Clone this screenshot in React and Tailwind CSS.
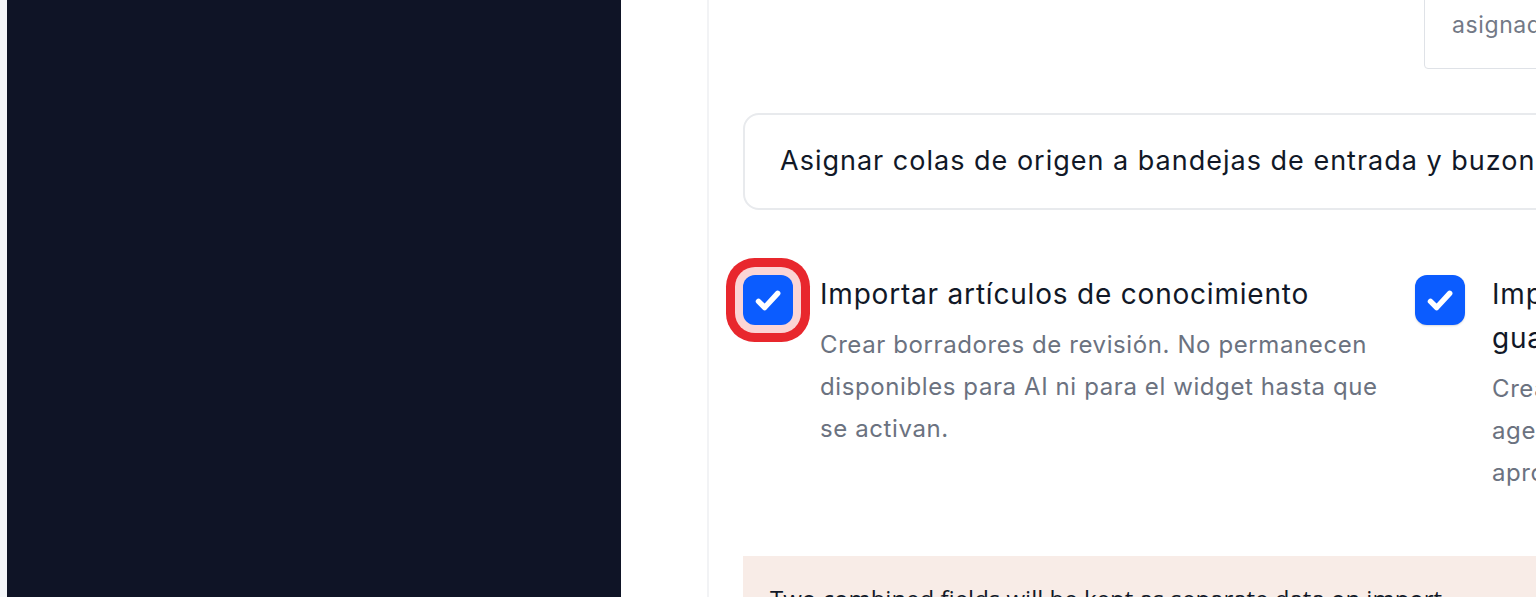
import React from 'react';

const Check = () => (
  <svg viewBox="0 0 24 24" className="w-[40px] h-[40px]" fill="none" stroke="white" strokeWidth={3.3} strokeLinecap="round" strokeLinejoin="round">
    <path d="M6.3 12.8l3.7 3.7L17.8 8" />
  </svg>
);

const Option = ({ focused, title, children }) => (
  <div className="flex items-start gap-[27px]">
    <div
      className={
        'shrink-0 mt-[3px] w-[50px] h-[50px] rounded-[12px] bg-[#0b5cff] flex items-center justify-center ' +
        (focused ? 'shadow-[0_0_0_8px_#fbd5d5,0_0_0_17px_#e8272d]' : 'shadow-[0_1px_2px_rgba(0,0,0,0.15)]')
      }
    >
      <Check />
    </div>
    <div className="flex-1 min-w-0">
      <div className="text-[28px] leading-[44px] tracking-[0.8px] text-[#111827]">{title}</div>
      <div className="mt-[8px] text-[24px] leading-[42px] tracking-[0.6px] text-[#6b7280]">{children}</div>
    </div>
  </div>
);

export default function App() {
  return (
    <div
      className="w-[1536px] h-[597px] overflow-hidden flex bg-white"
      style={{ fontFamily: 'Inter, "Noto Sans", sans-serif' }}
    >
      <div className="w-[7px] shrink-0 bg-[#f4f6f9]" />
      <div className="w-[614px] shrink-0 bg-[#0f1426]" />
      <div className="w-[86px] shrink-0 bg-white" />
      <div className="w-[2px] shrink-0 bg-[#f2f3f5]" />

      <div className="shrink-0 w-[1400px] pl-[34px]">
        {/* top input, mostly cut off */}
        <div className="h-[69px] flex">
          <div className="ml-[681px] -mt-[21px] w-[500px] h-[90px] border border-[#dfe2e7] rounded-b-[4px] pl-[27px] pt-[29px] text-[23px] leading-[32px] tracking-[0.6px] text-[#737986]">
            asignado automáticamente
          </div>
        </div>

        <div className="mt-[44px] w-[1320px] h-[97px] border-2 border-[#e8eaed] rounded-[16px] flex items-center px-[35px]">
          <span className="text-[27px] tracking-[1px] text-[#111827]">
            Asignar colas de origen a bandejas de entrada y buzones de correo
          </span>
        </div>

        <div className="mt-[62px] grid grid-cols-[648px_648px] gap-x-[24px]">
          <Option focused title="Importar artículos de conocimiento">
            Crear borradores de revisión. No permanecen disponibles para AI ni para el widget hasta que se activan.
          </Option>
          <Option title={<>Importar macros como respuestas<br />guardadas</>}>
            Crear respuestas guardadas para los<br />agentes. Se publican después de su<br />aprobación.
          </Option>
        </div>

        <div className="mt-[62px] w-[1320px] h-[120px] bg-[#f8ece7] px-[27px] pt-[25px]">
          <p className="text-[24px] text-[#111827]" style={{ fontFamily: '"Open Sans", sans-serif' }}>
            Two combined fields will be kept as separate data on import.
          </p>
        </div>
      </div>
    </div>
  );
}
